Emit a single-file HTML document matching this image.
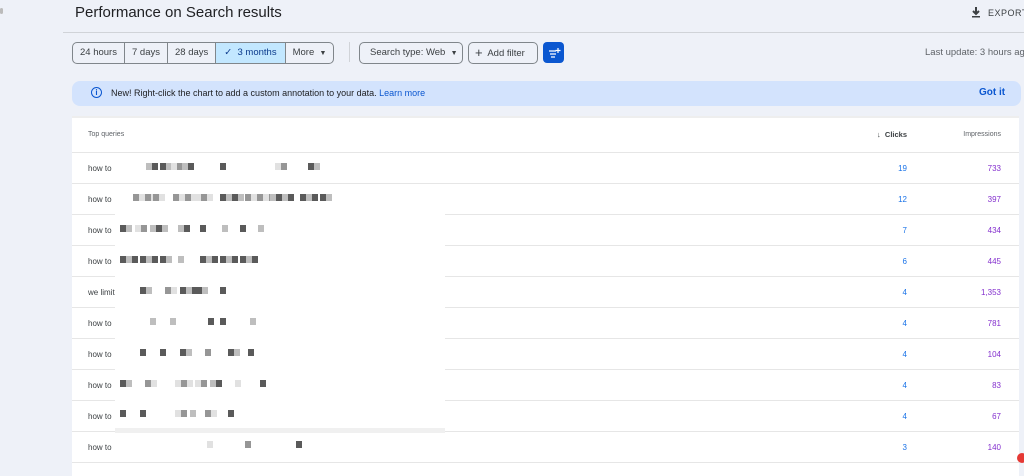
<!DOCTYPE html>
<html><head><style>
body{margin:0;width:1024px;height:469px;background:#eef1f8;font-family:"Liberation Sans",sans-serif;position:relative;overflow:hidden;color:#3c4043;white-space:nowrap}
.a{position:absolute}
.title{left:75px;top:4px;font-size:15px;color:#202124}
.hr{left:63px;top:32px;width:961px;height:1px;background:#d0d3d8}
.seg{left:72px;top:42px;height:20px;border:1px solid #80868b;border-radius:5px;display:flex;overflow:hidden;font-size:9.5px}
.seg div{padding:0 7px;line-height:20px;border-right:1px solid #80868b}
.seg div:last-child{border-right:0}
.btn{top:42px;height:22px;border:1px solid #80868b;border-radius:5px;font-size:9.5px;line-height:20px;box-sizing:border-box}
.card{left:72px;top:116px;width:947px;height:360px;background:#fff}
.row{position:absolute;left:0;width:947px;height:31px;box-sizing:border-box;border-bottom:1px solid #e6e6e6;font-size:8px}
.q{position:absolute;left:16px;top:11px;color:#3c4043}
.c{position:absolute;right:112px;top:11px;color:#1a73e8}
.i{position:absolute;right:18px;top:11px;color:#8430ce}
.px{position:absolute;width:6px;height:7px}
</style></head><body>
<div class="a" style="left:0;top:8px;width:3px;height:6px;background:#bbb;border-radius:3px"></div>
<div class="a title">Performance on Search results</div>
<div class="a" style="left:970px;top:6px;font-size:9px;letter-spacing:.5px;color:#3c4043"><svg width="12" height="12" viewBox="0 0 12 12" style="vertical-align:-2px;margin-right:6px"><path d="M6 1v6M3 5l3 3 3-3" stroke="#3c4043" stroke-width="2" fill="none"/><rect x="2" y="10" width="8" height="1.5" fill="#3c4043"/></svg>EXPORT</div>
<div class="a hr"></div>
<div class="a seg"><div>24 hours</div><div>7 days</div><div>28 days</div><div style="background:#c2e7ff;color:#0b3a8c;padding:0 8px">✓&nbsp; 3 months</div><div>More &nbsp;<span style="font-size:7px">▼</span></div></div>
<div class="a" style="left:349px;top:42px;width:1px;height:20px;background:#d0d3d8"></div>
<div class="a btn" style="left:359px;width:104px;padding-left:10px">Search type: Web &nbsp;<span style="font-size:7px">▼</span></div>
<div class="a btn" style="left:468px;width:70px;padding-left:6px"><span style="font-size:13px;vertical-align:-1px">+</span>&nbsp; Add filter</div>
<div class="a" style="left:543px;top:42px;width:21px;height:21px;background:#0b57d0;border-radius:4px"><svg width="21" height="21"><path d="M6 9h7M7 12h6M8 15h4M15 6v5M12.5 8.5h5" stroke="#fff" stroke-width="1.2"/></svg></div>
<div class="a" style="left:925px;top:47px;font-size:9.5px;color:#5f6368">Last update: 3 hours ago</div>
<div class="a" style="left:72px;top:81px;width:949px;height:25px;background:#d3e3fd;border-radius:8px"></div>
<div class="a" style="left:91px;top:87px;width:9px;height:9px;border:1.3px solid #0b57d0;border-radius:50%;font-size:8px;color:#0b57d0;text-align:center;line-height:9px;font-weight:bold">i</div>
<div class="a" style="left:111px;top:88px;font-size:9px;color:#202124">New! Right-click the chart to add a custom annotation to your data. <span style="color:#0b57d0">Learn more</span></div>
<div class="a" style="left:979px;top:87px;font-size:10px;color:#0b57d0;font-weight:bold">Got it</div>
<div class="a card">
<div class="row" style="top:0;height:37px;border-top:2px solid #eee"><span class="q" style="top:13px;font-size:7px;color:#5f6368">Top queries</span><span class="c" style="top:12px;color:#3c4043;font-weight:bold;font-size:7.5px">↓&nbsp; Clicks</span><span class="i" style="top:13px;color:#5f6368;font-size:7px">Impressions</span></div>
<div class="row" style="top:37px"><span class="q">how to</span><span class="c">19</span><span class="i">733</span></div>
<div class="row" style="top:68px"><span class="q">how to</span><span class="c">12</span><span class="i">397</span></div>
<div class="row" style="top:99px"><span class="q">how to</span><span class="c">7</span><span class="i">434</span></div>
<div class="row" style="top:130px"><span class="q">how to</span><span class="c">6</span><span class="i">445</span></div>
<div class="row" style="top:161px"><span class="q">we limit</span><span class="c">4</span><span class="i">1,353</span></div>
<div class="row" style="top:192px"><span class="q">how to</span><span class="c">4</span><span class="i">781</span></div>
<div class="row" style="top:223px"><span class="q">how to</span><span class="c">4</span><span class="i">104</span></div>
<div class="row" style="top:254px"><span class="q">how to</span><span class="c">4</span><span class="i">83</span></div>
<div class="row" style="top:285px"><span class="q">how to</span><span class="c">4</span><span class="i">67</span></div>
<div class="row" style="top:316px"><span class="q">how to</span><span class="c">3</span><span class="i">140</span></div>
</div>
<div class="a" style="left:115px;top:184px;width:330px;height:246px;background:#fff"></div>
<div class="a" style="left:115px;top:428px;width:330px;height:5px;background:#f0f0f0"></div>
<div id="p"></div>
<div class="a" style="left:1017px;top:453px;width:10px;height:10px;border-radius:50%;background:#e53935"></div>
<script>
var rows=[[163,[146,160,171,182,220,275,308],[8,7,8,9,4,8,7]],[194,[133,153,173,195,220,245,270,300,320],[20,12,20,15,20,25,20,15,8]],[225,[120,135,150,178,200,222,240,258],[10,12,14,10,6,6,6,6]],[256,[120,140,160,178,200,220,240],[14,14,8,6,14,14,14]],[287,[140,165,180,196,220],[8,10,20,10,6]],[318,[150,170,208,220,250],[6,6,6,6,6]],[349,[140,160,180,205,228,248],[6,6,8,6,8,6]],[380,[120,145,175,195,210,235,260],[10,10,15,10,8,6,6]],[410,[120,140,175,190,205,228],[6,6,8,6,10,6]],[441,[207,245,296],[6,6,6]]];
var h='';rows.forEach(function(r){r[1].forEach(function(x,k){var w=r[2][k];for(var j=0;j<w;j+=6){var g=[90,150,190,225][(x+j)%4];h+='<div class="px a" style="left:'+(x+j)+'px;top:'+r[0]+'px;background:rgb('+g+','+g+','+g+')"></div>';}});});
document.getElementById('p').innerHTML=h;
</script>
</body></html>
